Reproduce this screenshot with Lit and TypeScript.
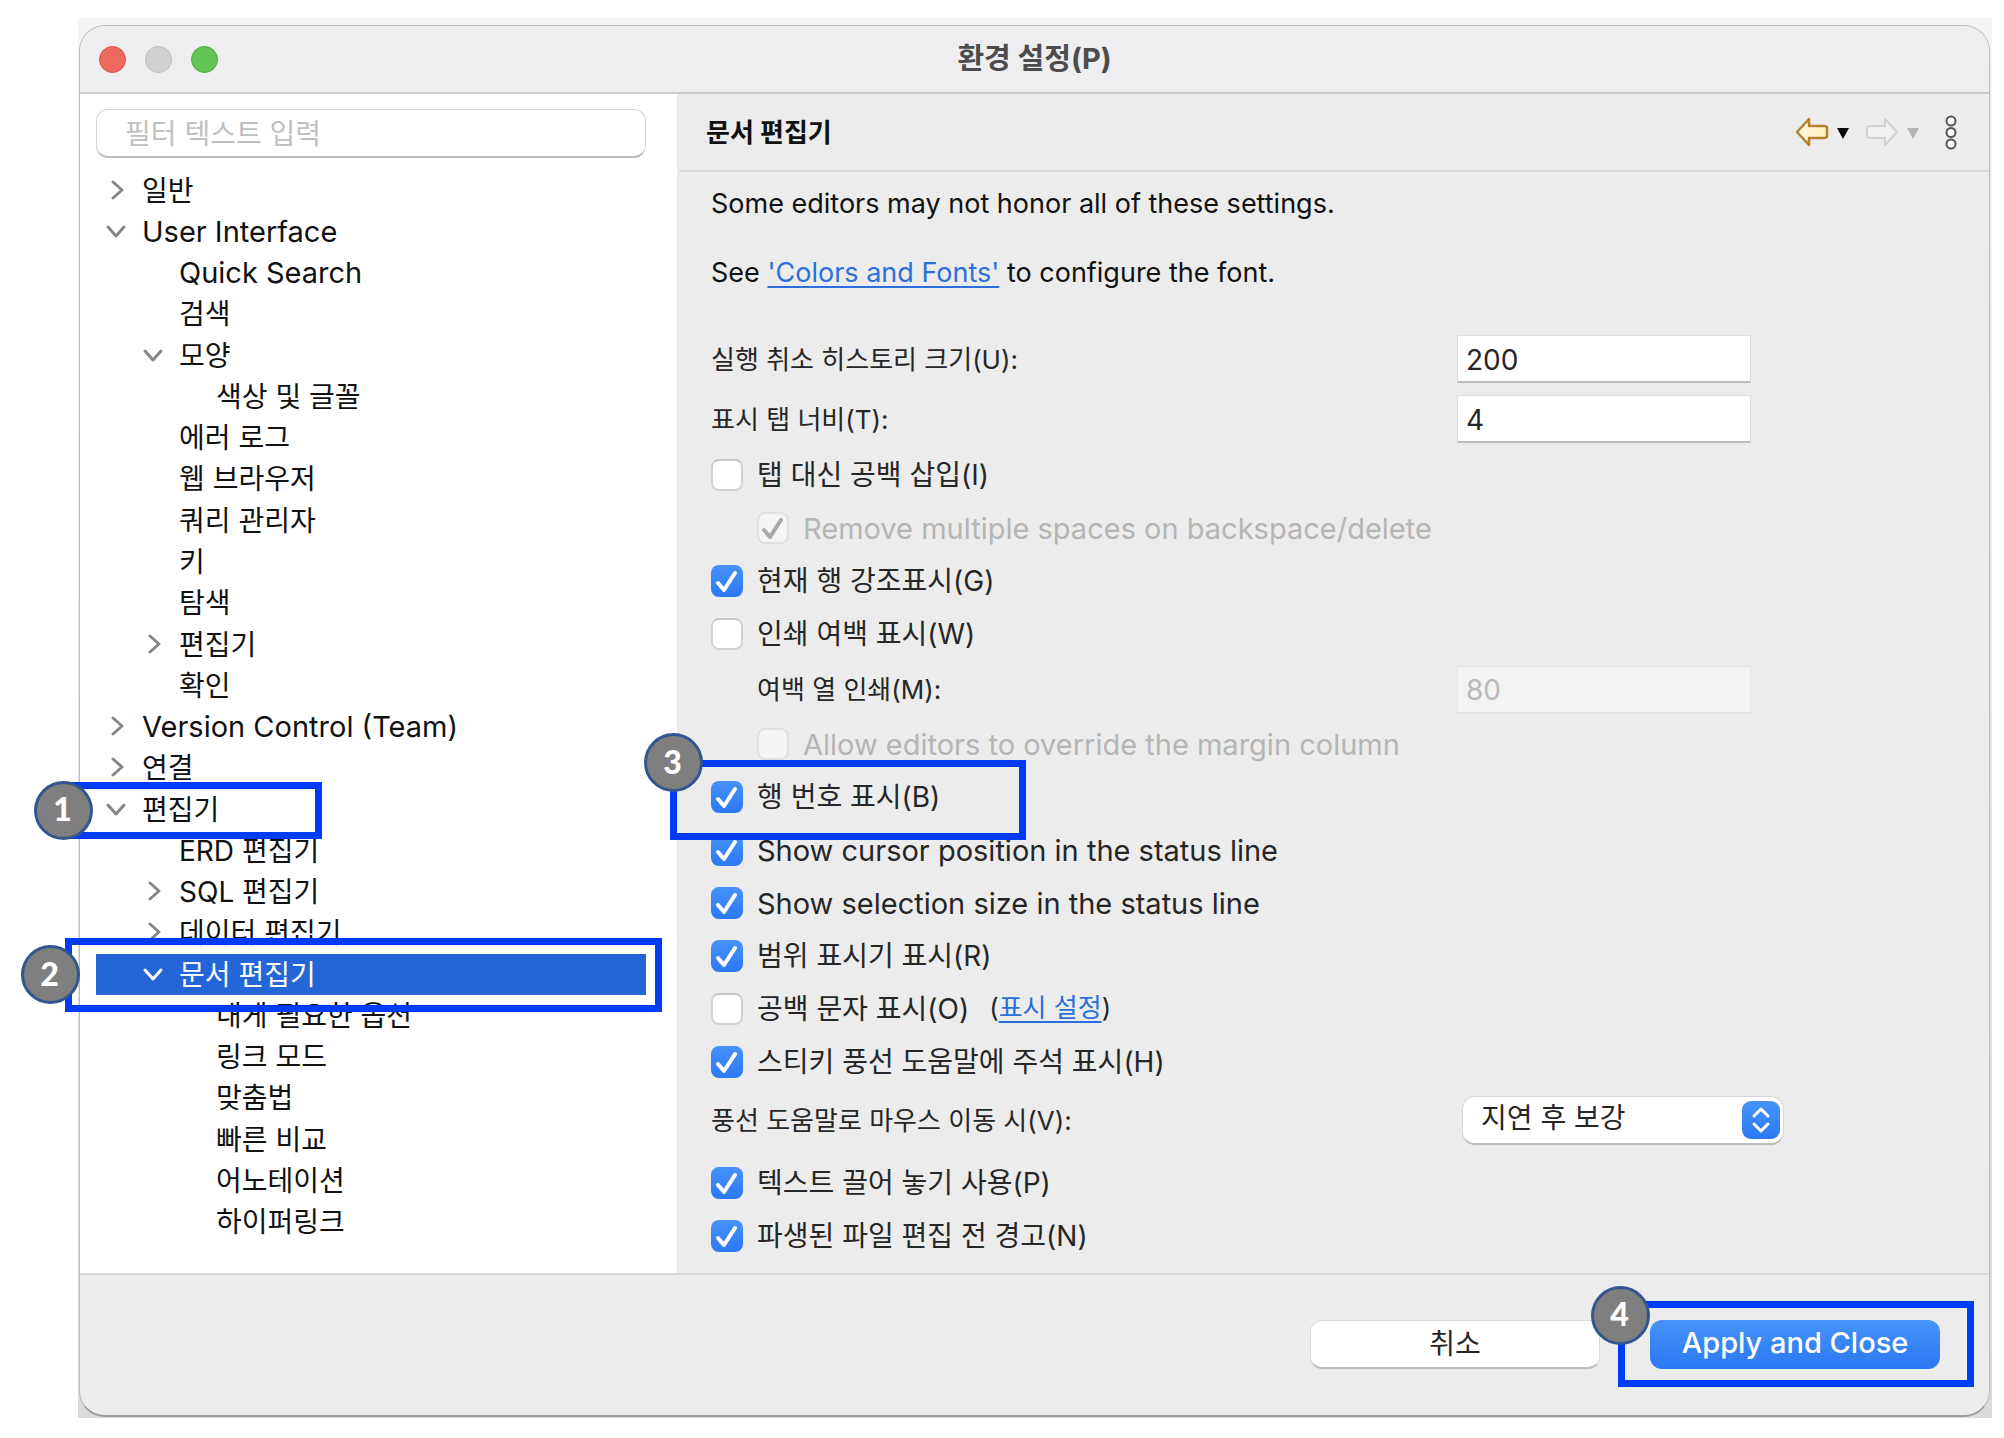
import { LitElement, html, css, svg, nothing, type TemplateResult } from "lit";
import { customElement } from "lit/decorators.js";
import { classMap } from "lit/directives/class-map.js";

interface TreeNode {
  label: string;
  level: 0 | 1 | 2;
  open?: boolean;
  closed?: boolean;
  selected?: boolean;
  step?: number;
}

const TREE: TreeNode[] = [
  { label: "일반", level: 0, closed: true },
  { label: "User Interface", level: 0, open: true },
  { label: "Quick Search", level: 1 },
  { label: "검색", level: 1 },
  { label: "모양", level: 1, open: true },
  { label: "색상 및 글꼴", level: 2 },
  { label: "에러 로그", level: 1 },
  { label: "웹 브라우저", level: 1 },
  { label: "쿼리 관리자", level: 1 },
  { label: "키", level: 1 },
  { label: "탐색", level: 1 },
  { label: "편집기", level: 1, closed: true },
  { label: "확인", level: 1 },
  { label: "Version Control (Team)", level: 0, closed: true },
  { label: "연결", level: 0, closed: true },
  { label: "편집기", level: 0, open: true, step: 1 },
  { label: "ERD 편집기", level: 1 },
  { label: "SQL 편집기", level: 1, closed: true },
  { label: "데이터 편집기", level: 1, closed: true },
  { label: "문서 편집기", level: 1, open: true, selected: true, step: 2 },
  { label: "내게 필요한 옵션", level: 2 },
  { label: "링크 모드", level: 2 },
  { label: "맞춤법", level: 2 },
  { label: "빠른 비교", level: 2 },
  { label: "어노테이션", level: 2 },
  { label: "하이퍼링크", level: 2 },
];

// Labels written only in Latin script are set one size larger than Korean ones.
const isLatin = (text: string) => /^[\x20-\x7e]+$/.test(text);

const callout = (step: number) => html`
  <span class="callout callout-${step}"><span class="badge">${step}</span></span>
`;

const baseStyles = css`
  * {
    box-sizing: border-box;
  }
  button,
  input,
  select {
    font: inherit;
    color: inherit;
    margin: 0;
  }
  a {
    color: #2a6fdb;
    text-decoration: underline;
    text-decoration-thickness: 2px;
    text-underline-offset: 4px;
  }
  .latin {
    font-size: 29px;
  }
  .callout {
    position: absolute;
    z-index: 2;
    border: 7px solid #003cf5;
    pointer-events: none;
  }
  .badge {
    position: absolute;
    display: grid;
    place-items: center;
    width: 59px;
    height: 59px;
    padding: 0 2px 2px 0;
    border: 3px solid #34558f;
    border-radius: 50%;
    background: #7f7f7f;
    color: #fff;
    font: 900 32px/1 Lato, "Open Sans", sans-serif;
  }
`;

@customElement("pref-tree")
export class PrefTree extends LitElement {
  static styles = [
    baseStyles,
    css`
      :host {
        display: flex;
        flex-direction: column;
        padding: 15px 31px 30px 16px;
        background: #fff;
      }
      .filter {
        height: 49px;
        padding: 2px 28px 0;
        border: 1px solid #d4d4d4;
        border-bottom: 2px solid #bdbdbd;
        border-radius: 12px;
        background: #fff;
        outline: none;
      }
      .filter::placeholder {
        color: #c0c0c0;
        opacity: 1;
      }
      .tree {
        flex: 1;
        display: flex;
        flex-direction: column;
        margin: 12px 0 0;
        padding: 0;
        list-style: none;
      }
      .row {
        position: relative;
        flex: 1 1 0;
        min-height: 36px;
        display: flex;
        align-items: center;
        line-height: 36px;
        white-space: nowrap;
      }
      .level-1 {
        padding-left: 37px;
      }
      .level-2 {
        padding-left: 74px;
      }
      .selected {
        background: #2465d8;
        color: #fff;
      }
      .toggle {
        display: grid;
        place-items: center;
        flex: none;
        width: 46px;
        height: 36px;
        padding: 0 6px 2px 0;
        border: 0;
        background: none;
        color: #868686;
      }
      .selected .toggle {
        color: #fff;
      }
      .leaf {
        flex: none;
        width: 46px;
      }
      .callout-1 {
        top: -7px;
        bottom: -9px;
        left: -35px;
        width: 261px;
      }
      .callout-1 .badge {
        top: -8px;
        left: -34px;
      }
      .callout-2 {
        top: -16px;
        bottom: -17px;
        left: -31px;
        right: -16px;
      }
      .callout-2 .badge {
        top: 0;
        left: -51px;
      }
    `,
  ];

  private arrow(open: boolean) {
    const d = open ? "M3 7 L11 16 L19 7" : "M8 3 L17 11 L8 19";
    return html`<svg width="22" height="22" viewBox="0 0 22 22" fill="none" stroke="currentColor"
      stroke-width="3" stroke-linecap="round" stroke-linejoin="round" aria-hidden="true">${svg`<path d=${d} />`}</svg>`;
  }

  private row(n: TreeNode) {
    const cls = { row: true, selected: !!n.selected, ["level-" + n.level]: true };
    const branch = n.open || n.closed;
    return html`
      <li class=${classMap(cls)} role="treeitem" aria-level=${n.level + 1}
        aria-selected=${n.selected ? "true" : "false"} aria-expanded=${branch ? String(!!n.open) : nothing}>
        ${branch
          ? html`<button class="toggle" type="button" aria-label=${n.label}>${this.arrow(!!n.open)}</button>`
          : html`<span class="leaf"></span>`}
        <span class=${classMap({ latin: isLatin(n.label) })}>${n.label}</span>
        ${n.step ? callout(n.step) : nothing}
      </li>
    `;
  }

  render() {
    return html`
      <input class="filter" type="search" placeholder="필터 텍스트 입력" aria-label="필터 텍스트 입력" />
      <ul class="tree" role="tree">${TREE.map((n) => this.row(n))}</ul>
    `;
  }
}

@customElement("editor-page")
export class EditorPage extends LitElement {
  static styles = [
    baseStyles,
    css`
      :host {
        display: flex;
        flex-direction: column;
        background: #ececec;
      }
      .head {
        display: flex;
        align-items: center;
        justify-content: space-between;
        height: 78px;
        margin-left: 2px;
        padding: 0 30px 0 27px;
        border-bottom: 2px solid #d9d9d9;
      }
      .title {
        margin: 0;
        padding-bottom: 4px;
        color: #111;
        font-size: 26px;
        font-weight: 700;
      }
      .nav {
        display: flex;
        align-items: center;
      }
      .icon {
        display: grid;
        place-items: center;
        padding: 0;
        border: 0;
        background: none;
      }
      .caret {
        width: 12px;
        margin: 2px 16px 0 8px;
      }
      .more {
        width: 16px;
        margin-left: 8px;
      }
      .form {
        flex: 1;
        display: flex;
        flex-direction: column;
        padding: 14px 36px 10px 34px;
      }
      .intro {
        margin: 0 0 33px;
        line-height: 36px;
        color: #111;
        font-size: 27px;
      }
      .line {
        display: grid;
        grid-template-columns: 746fr 496fr;
        align-items: center;
        height: 60px;
      }
      .intro + .line {
        margin-top: 5px;
      }
      .line label {
        padding-bottom: 4px;
        font-size: 26px;
      }
      .short {
        height: 57px;
      }
      .short label {
        padding-left: 46px;
      }
      .combo {
        height: 68px;
        padding-bottom: 6px;
      }
      .field {
        width: 294px;
        height: 48px;
        padding: 2px 8px 0;
        border: 1px solid #dcdcdc;
        border-bottom: 2px solid #bcbcbc;
        background: #fff;
        outline: none;
      }
      .field:disabled {
        border-color: #e2e2e2;
        background: #f3f3f3;
        color: #b9b9b9;
      }
      .check {
        position: relative;
        display: flex;
        align-items: center;
        height: 53px;
        padding-bottom: 2px;
      }
      .check label {
        line-height: 34px;
      }
      .check .latin {
        padding-top: 2px;
      }
      .nested {
        padding-left: 46px;
        color: #b5b5b5;
      }
      .box {
        display: grid;
        flex: none;
        width: 32px;
        height: 32px;
        margin-right: 14px;
      }
      .box > * {
        grid-area: 1 / 1;
      }
      .box input {
        appearance: none;
        width: 32px;
        height: 32px;
        border: 2px solid #d2d2d2;
        border-top-color: #c6c6c6;
        border-radius: 8px;
        background: #fff;
      }
      .box input:checked {
        border: 0;
        background: linear-gradient(#4693f9, #2b78f4);
      }
      .box input:disabled {
        border: 2px solid #dfdfdf;
        background: #f4f4f4;
      }
      .box svg {
        z-index: 1;
        color: #fff;
        pointer-events: none;
      }
      .nested svg {
        color: #a9a9a9;
      }
      .aside {
        margin-left: 20px;
        padding-bottom: 6px;
        font-size: 26px;
      }
      .select {
        display: grid;
        align-items: center;
        width: 322px;
        margin-left: 5px;
      }
      .select > * {
        grid-area: 1 / 1;
      }
      .select select {
        appearance: none;
        height: 49px;
        padding: 0 52px 4px 18px;
        border: 1px solid #d6d6d6;
        border-bottom: 2px solid #bdbdbd;
        border-radius: 13px;
        background: #fff;
        outline: none;
      }
      .knob {
        justify-self: end;
        display: grid;
        place-items: center;
        width: 38px;
        height: 38px;
        margin-right: 4px;
        border-radius: 9px;
        background: linear-gradient(#4693f9, #2b78f4);
        pointer-events: none;
      }
      .callout-3 {
        top: -11px;
        bottom: -16px;
        left: -41px;
        width: 356px;
      }
      .callout-3 .badge {
        top: -34px;
        left: -33px;
      }
    `,
  ];

  private check(id: string, label: string, on: boolean, nested = false, extra: TemplateResult | typeof nothing = nothing) {
    return html`
      <div class=${classMap({ check: true, nested })}>
        <span class="box">
          <input id=${id} type="checkbox" ?checked=${on} ?disabled=${nested} />
          ${on
            ? html`<svg width="32" height="32" viewBox="0 0 32 32" fill="none" stroke="currentColor" stroke-width="4"
                stroke-linecap="round" stroke-linejoin="round" aria-hidden="true"><path d="M7 18 L13 25 L24 8" /></svg>`
            : nothing}
        </span>
        <label for=${id} class=${classMap({ latin: isLatin(label) })}>${label}</label>
        ${extra}
      </div>
    `;
  }

  private arrow(dim: boolean) {
    return html`<svg width="34" height="30" viewBox="0 0 34 30" aria-hidden="true">
      <defs>
        <linearGradient id="gold" x1="0" y1="0" x2="1" y2="1">
          <stop offset="0" stop-color="#fffdf0" /><stop offset="1" stop-color="#fdeeb0" />
        </linearGradient>
      </defs>
      ${dim
        ? svg`<path d="M32 15 L20 2 V9 H5 Q2 9 2 11 V19 Q2 21 5 21 H20 V28 Z" fill="#f0f0f0" stroke="#d2d2d2" stroke-width="2" stroke-linejoin="round" />`
        : svg`<path d="M2 15 L14 2 V9 H29 Q32 9 32 11 V19 Q32 21 29 21 H14 V28 Z" fill="url(#gold)" stroke="#b9802c" stroke-width="2.5" stroke-linejoin="round" />`}
    </svg>`;
  }

  private caret(color: string) {
    return html`<svg width="12" height="12" viewBox="0 0 12 12" aria-hidden="true">
      <path d="M0 1 H12 L6 12 Z" fill=${color} /></svg>`;
  }

  render() {
    return html`
      <header class="head">
        <h2 class="title">문서 편집기</h2>
        <nav class="nav">
          <button class="icon" type="button" aria-label="Back">${this.arrow(false)}</button>
          <button class="icon caret" type="button" aria-label="Back history">${this.caret("#000")}</button>
          <button class="icon" type="button" aria-label="Forward" disabled>${this.arrow(true)}</button>
          <button class="icon caret" type="button" aria-label="Forward history" disabled>${this.caret("#b4b4b4")}</button>
          <button class="icon more" type="button" aria-label="Menu">
            <svg width="16" height="38" viewBox="0 0 16 38" fill="#fff" stroke="#555" stroke-width="2" aria-hidden="true">
              <circle cx="8" cy="8" r="4.5" /><circle cx="8" cy="19.5" r="4.5" /><circle cx="8" cy="31" r="4.5" />
            </svg>
          </button>
        </nav>
      </header>
      <form class="form" @submit=${(e: Event) => e.preventDefault()}>
        <p class="intro">Some editors may not honor all of these settings.</p>
        <p class="intro">See <a href="#fonts">'Colors and Fonts'</a> to configure the font.</p>
        <div class="line">
          <label for="undo">실행 취소 히스토리 크기(U):</label>
          <input id="undo" class="field" type="text" value="200" />
        </div>
        <div class="line">
          <label for="tab">표시 탭 너비(T):</label>
          <input id="tab" class="field" type="text" value="4" />
        </div>
        ${this.check("spaces", "탭 대신 공백 삽입(I)", false)}
        ${this.check("remove", "Remove multiple spaces on backspace/delete", true, true)}
        ${this.check("current", "현재 행 강조표시(G)", true)}
        ${this.check("margin", "인쇄 여백 표시(W)", false)}
        <div class="line short">
          <label for="column">여백 열 인쇄(M):</label>
          <input id="column" class="field" type="text" value="80" disabled />
        </div>
        ${this.check("override", "Allow editors to override the margin column", false, true)}
        ${this.check("numbers", "행 번호 표시(B)", true, false, callout(3))}
        ${this.check("cursor", "Show cursor position in the status line", true)}
        ${this.check("selection", "Show selection size in the status line", true)}
        ${this.check("range", "범위 표시기 표시(R)", true)}
        ${this.check("whitespace", "공백 문자 표시(O)", false, false,
          html`<span class="aside">(<a href="#whitespace">표시 설정</a>)</span>`)}
        ${this.check("sticky", "스티키 풍선 도움말에 주석 표시(H)", true)}
        <div class="line combo">
          <label for="hover">풍선 도움말로 마우스 이동 시(V):</label>
          <span class="select">
            <select id="hover"><option>지연 후 보강</option></select>
            <span class="knob">
              <svg width="22" height="30" viewBox="0 0 22 30" fill="none" stroke="#fff" stroke-width="3"
                stroke-linecap="round" stroke-linejoin="round" aria-hidden="true">
                <path d="M4 11 L11 4 L18 11 M4 19 L11 26 L18 19" />
              </svg>
            </span>
          </span>
        </div>
        ${this.check("drag", "텍스트 끌어 놓기 사용(P)", true)}
        ${this.check("derived", "파생된 파일 편집 전 경고(N)", true)}
      </form>
    `;
  }
}

@customElement("app-root")
export class AppRoot extends LitElement {
  static styles = [
    baseStyles,
    css`
      :host {
        box-sizing: border-box;
        display: flex;
        min-height: 100vh;
        padding: 18px 12px 20px 78px;
        background: #fff;
        color: #262626;
        font-family: Inter, "Noto Sans CJK KR", sans-serif;
        font-size: 28px;
      }
      .backdrop {
        flex: 1;
        display: flex;
        padding: 7px 2px 1px 1px;
        background: linear-gradient(#f4f4f4, #dadada);
      }
      .window {
        flex: 1;
        display: flex;
        flex-direction: column;
        border: 1px solid #bdbdbd;
        border-bottom: 2px solid #9c9c9c;
        border-radius: 26px;
        background: #ececec;
      }
      .titlebar {
        display: grid;
        grid-template-columns: 1fr auto 1fr;
        align-items: center;
        height: 68px;
        padding: 0 19px;
        border-bottom: 2px solid #cbcbcb;
        border-radius: 25px 25px 0 0;
        background: #eeeef0;
      }
      .lights {
        display: flex;
        gap: 19px;
      }
      .light {
        width: 27px;
        height: 27px;
        padding: 0;
        border: 1px solid #d8503f;
        border-radius: 50%;
        background: #ed6a5e;
      }
      .minimise {
        border-color: #bcbcbe;
        background: #d1d1d3;
      }
      .zoom {
        border-color: #4aa83b;
        background: #61c454;
      }
      .name {
        margin: 0;
        padding-bottom: 6px;
        color: #4c4c4c;
        font-size: 29px;
        font-weight: 700;
      }
      .body {
        flex: 1;
        display: grid;
        grid-template-columns: 597fr 1312fr;
      }
      pref-tree {
        color: #111;
      }
      .footer {
        display: flex;
        align-items: center;
        justify-content: flex-end;
        gap: 50px;
        height: 142px;
        padding: 0 49px 2px;
        border-top: 2px solid #d9d9d9;
      }
      .slot {
        position: relative;
        display: flex;
      }
      .action {
        width: 290px;
        height: 49px;
        padding: 0 0 4px;
        border: 1px solid #dadada;
        border-bottom: 2px solid #bdbdbd;
        border-radius: 12px;
        background: #fff;
      }
      .primary {
        border: 0;
        background: linear-gradient(#4693f9, #2b78f4);
        color: #fff;
        font-size: 29px;
        font-weight: 500;
      }
      .callout-4 {
        top: -19px;
        bottom: -18px;
        left: -32px;
        right: -34px;
      }
      .callout-4 .badge {
        top: -22px;
        left: -34px;
      }
    `,
  ];

  render() {
    return html`
      <div class="backdrop">
        <main class="window">
          <header class="titlebar">
            <div class="lights">
              <button class="light" type="button" aria-label="Close"></button>
              <button class="light minimise" type="button" aria-label="Minimise" disabled></button>
              <button class="light zoom" type="button" aria-label="Zoom"></button>
            </div>
            <h1 class="name">환경 설정(P)</h1>
          </header>
          <div class="body">
            <pref-tree></pref-tree>
            <editor-page></editor-page>
          </div>
          <footer class="footer">
            <button class="action" type="button">취소</button>
            <span class="slot">
              <button class="action primary" type="button">Apply and Close</button>
              ${callout(4)}
            </span>
          </footer>
        </main>
      </div>
    `;
  }
}
